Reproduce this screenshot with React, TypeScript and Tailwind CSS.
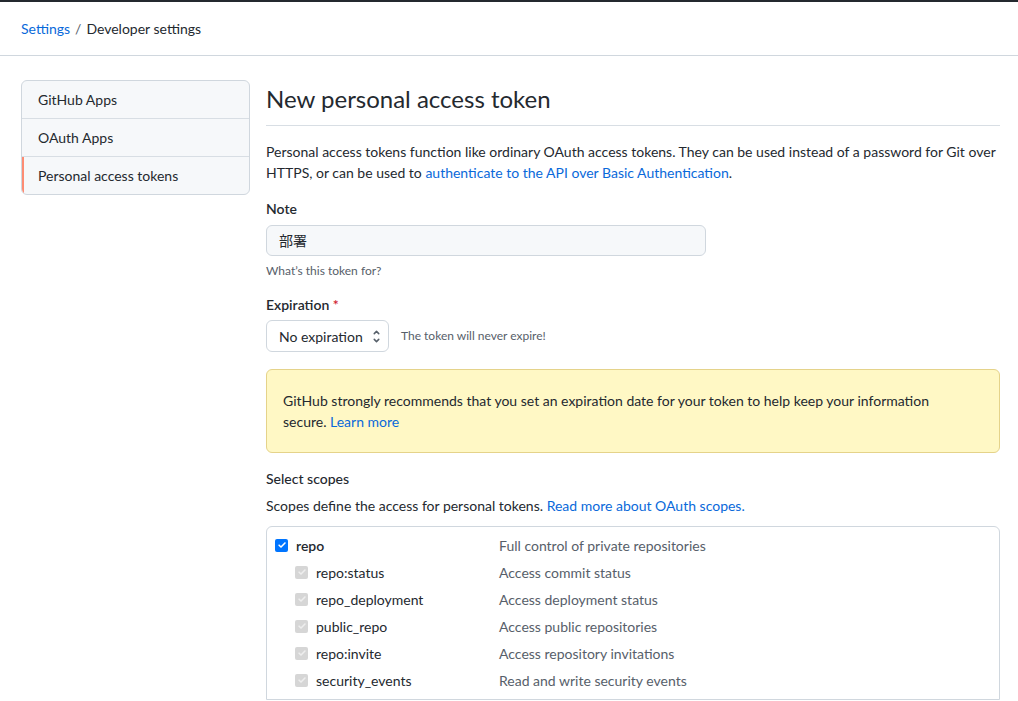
import { ChevronDown, ChevronUp } from 'lucide-react';

const font = { fontFamily: 'Lato, "Noto Sans CJK JP", sans-serif' };

const scopes = [
  { name: 'repo:status', desc: 'Access commit status' },
  { name: 'repo_deployment', desc: 'Access deployment status' },
  { name: 'public_repo', desc: 'Access public repositories' },
  { name: 'repo:invite', desc: 'Access repository invitations' },
  { name: 'security_events', desc: 'Read and write security events' },
];

export default function App() {
  return (
    <div className="min-h-[701px] bg-white text-[14px] text-[#24292f]" style={font}>
      <div className="h-[2px] bg-[#24292f]" />
      <div className="flex h-[54px] items-center border-b border-[#d0d7de] px-[21px]">
        <a className="text-[#0969da]">Settings</a>
        <span className="mx-[5px] text-[#57606a]">/</span>
        <span>Developer settings</span>
      </div>

      <div className="flex gap-[16px] pl-[21px] pr-[18px] pt-[24px]">
        <nav className="w-[229px] shrink-0 self-start overflow-hidden rounded-[6px] border border-[#d0d7de] bg-[#f6f8fa]">
          <SideItem label="GitHub Apps" />
          <SideItem label="OAuth Apps" />
          <SideItem label="Personal access tokens" active />
        </nav>

        <main className="w-[734px] shrink-0">
          <h1 className="mt-[1px] border-b border-[#d8dee4] pb-[8px] text-[24px] font-normal leading-[36px]">
            New personal access token
          </h1>
          <p className="mt-[15px] leading-[21px]">
            Personal access tokens function like ordinary OAuth access tokens. They can be used
            instead of a password for Git over HTTPS, or can be used to{' '}
            <a className="text-[#0969da]">authenticate to the API over Basic Authentication</a>.
          </p>

          <div className="mt-[15px] font-semibold leading-[21px]">Note</div>
          <div className="mt-[6px] flex h-[31px] w-[440px] items-center rounded-[6px] border border-[#d0d7de] bg-[#f6f8fa] px-[12px]">
            部署
          </div>
          <div className="mt-[6px] text-[12px] leading-[18px] text-[#57606a]">
            What’s this token for?
          </div>

          <div className="mt-[14px] font-semibold leading-[21px]">
            Expiration <span className="text-[#cf222e]">*</span>
          </div>
          <div className="mt-[5px] flex items-center gap-[12px]">
            <div className="flex h-[32px] w-[123px] items-center justify-between whitespace-nowrap rounded-[6px] border border-[#d0d7de] bg-white pl-[12px] pr-[7px]">
              <span>No expiration</span>
              <span className="flex flex-col text-[#57606a]">
                <ChevronUp size={9} strokeWidth={4} className="-mb-[1px]" />
                <ChevronDown size={9} strokeWidth={4} />
              </span>
            </div>
            <span className="text-[12px] text-[#57606a]">The token will never expire!</span>
          </div>

          <div className="mt-[17px] rounded-[6px] border border-[#e5d38a] bg-[#fff8c5] py-[20px] pl-[16px] pr-[40px] leading-[21px]">
            GitHub strongly recommends that you set an expiration date for your token to help keep
            your information secure. <a className="text-[#0969da]">Learn more</a>
          </div>

          <div className="mt-[15px] font-medium leading-[21px]">Select scopes</div>
          <p className="mt-[6px] leading-[21px]">
            Scopes define the access for personal tokens.{' '}
            <a className="text-[#0969da]">Read more about OAuth scopes.</a>
          </p>

          <div className="mt-[10px] rounded-t-[6px] border border-[#d0d7de] px-[8px] pt-[8px] pb-[9px]">
            <div className="flex h-[20px] items-center">
              <div className="flex w-[224px] items-center gap-[8px]">
                <Check />
                <span className="font-semibold">repo</span>
              </div>
              <span className="text-[#57606a]">Full control of private repositories</span>
            </div>
            {scopes.map((s) => (
              <div key={s.name} className="mt-[7px] flex h-[20px] items-center">
                <div className="flex w-[224px] items-center gap-[8px] pl-[20px]">
                  <Check disabled />
                  <span>{s.name}</span>
                </div>
                <span className="text-[#57606a]">{s.desc}</span>
              </div>
            ))}
          </div>
        </main>
      </div>
    </div>
  );
}

function SideItem({ label, active }: { label: string; active?: boolean }) {
  return (
    <div
      className={
        active
          ? 'flex h-[37px] items-center border-l-2 border-l-[#fd8c73] pl-[14px]'
          : 'flex h-[38px] items-center border-b border-[#d8dee4] pl-[16px]'
      }
    >
      {label}
    </div>
  );
}

function Check({ disabled }: { disabled?: boolean }) {
  return (
    <span
      className={`flex h-[13px] w-[13px] items-center justify-center rounded-[2px] ${
        disabled ? 'bg-[#d6d6d6]' : 'bg-[#0075ff]'
      }`}
    >
      <svg viewBox="0 0 12 12" className="h-[10px] w-[10px]" fill="none">
        <path
          d="M2.5 6.2l2.3 2.3 4.8-5"
          stroke={disabled ? '#eeeeee' : '#fff'}
          strokeWidth="1.8"
          strokeLinecap="round"
          strokeLinejoin="round"
        />
      </svg>
    </span>
  );
}
